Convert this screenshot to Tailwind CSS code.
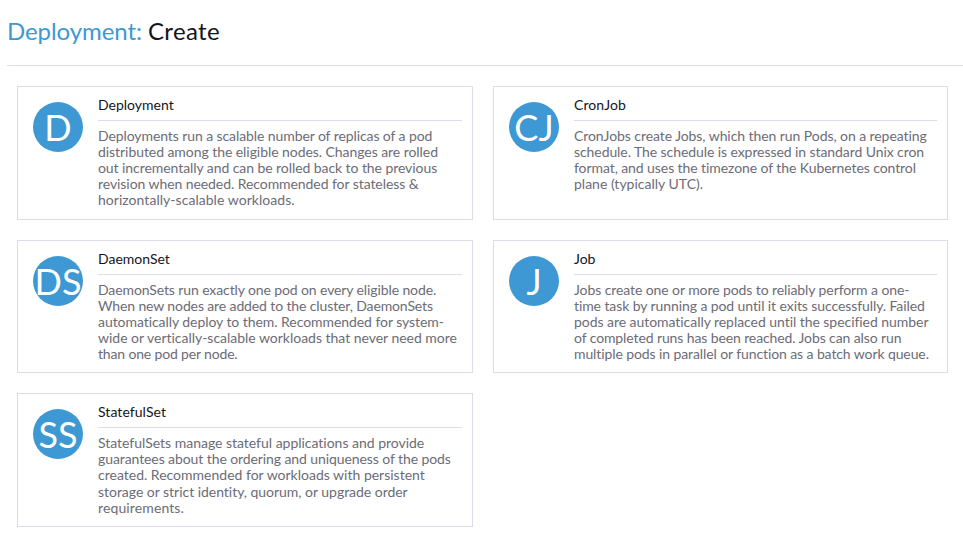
<!DOCTYPE html>
<html lang="en"><head><meta charset="utf-8"><title>Deployment: Create</title>
<script src="https://cdn.jsdelivr.net/npm/@tailwindcss/browser@4"></script></head>
<body class="bg-white font-['Lato',sans-serif] text-[14px] leading-[16px] text-[#141419] w-[963px] h-[537px] overflow-hidden [font-variant-ligatures:none]">
<header class="ml-[7px] h-[66px] border-b border-[#dcdee7] pt-[16px]"><h1 class="text-[24px] leading-[29px]"><span class="tracking-[-0.08px] text-[#3d98d3]">Deployment:</span> <span class="tracking-[0.35px]">Create</span></h1></header>
<main class="ml-[17px] mt-[20px] grid grid-cols-[456px_455px] gap-x-[20px] gap-y-[20px]">
<article class="flex h-[134px] border border-[#dcdee7] pl-[15px] pr-[10px] pt-[10px]"><div class="mt-[5px] mr-[15px] flex size-[50px] shrink-0 items-center justify-center rounded-full bg-[#3d98d3] text-[36px] text-white">D</div><div class="grow"><h2 class="h-[24px] border-b border-[#dcdee7]">Deployment</h2><p class="mt-[7px] whitespace-nowrap text-[#6c6c76]"><span class="tracking-[-0.09px]">Deployments run a scalable number of replicas of a pod</span><br><span class="tracking-[-0.06px]">distributed among the eligible nodes. Changes are rolled</span><br><span class="tracking-[-0.07px]">out incrementally and can be rolled back to the previous</span><br><span class="tracking-[-0.07px]">revision when needed. Recommended for stateless &amp;</span><br><span class="tracking-[0.04px]">horizontally-scalable workloads.</span></p></div></article>
<article class="flex h-[134px] border border-[#dcdee7] pl-[15px] pr-[10px] pt-[10px]"><div class="mt-[5px] mr-[15px] flex size-[50px] shrink-0 items-center justify-center rounded-full bg-[#3d98d3] text-[36px] text-white">CJ</div><div class="grow"><h2 class="h-[24px] border-b border-[#dcdee7] tracking-[0.1px]">CronJob</h2><p class="mt-[7px] whitespace-nowrap text-[#6c6c76]"><span class="tracking-[-0.07px]">CronJobs create Jobs, which then run Pods, on a repeating</span><br><span class="tracking-[-0.08px]">schedule. The schedule is expressed in standard Unix cron</span><br><span class="tracking-[-0.08px]">format, and uses the timezone of the Kubernetes control</span><br>plane (typically UTC).</p></div></article>
<article class="flex h-[133px] border border-[#dcdee7] pl-[15px] pr-[10px] pt-[10px]"><div class="mt-[5px] mr-[15px] flex size-[50px] shrink-0 items-center justify-center rounded-full bg-[#3d98d3] text-[36px] text-white">DS</div><div class="grow"><h2 class="h-[24px] border-b border-[#dcdee7]">DaemonSet</h2><p class="mt-[7px] whitespace-nowrap text-[#6c6c76]"><span class="tracking-[-0.11px]">DaemonSets run exactly one pod on every eligible node.</span><br><span class="tracking-[-0.12px]">When new nodes are added to the cluster, DaemonSets</span><br><span class="tracking-[-0.06px]">automatically deploy to them. Recommended for system-</span><br><span class="tracking-[-0.02px]">wide or vertically-scalable workloads that never need more</span><br><span class="tracking-[-0.16px]">than one pod per node.</span></p></div></article>
<article class="flex h-[133px] border border-[#dcdee7] pl-[15px] pr-[10px] pt-[10px]"><div class="mt-[5px] mr-[15px] flex size-[50px] shrink-0 items-center justify-center rounded-full bg-[#3d98d3] text-[36px] text-white">J</div><div class="grow"><h2 class="h-[24px] border-b border-[#dcdee7]">Job</h2><p class="mt-[7px] whitespace-nowrap text-[#6c6c76]"><span class="tracking-[-0.09px]">Jobs create one or more pods to reliably perform a one-</span><br><span class="tracking-[-0.09px]">time task by running a pod until it exits successfully. Failed</span><br><span class="tracking-[-0.05px]">pods are automatically replaced until the specified number</span><br><span class="tracking-[-0.11px]">of completed runs has been reached. Jobs can also run</span><br><span class="tracking-[-0.1px]">multiple pods in parallel or function as a batch work queue.</span></p></div></article>
<article class="flex h-[134px] border border-[#dcdee7] pl-[15px] pr-[10px] pt-[10px]"><div class="mt-[5px] mr-[15px] flex size-[50px] shrink-0 items-center justify-center rounded-full bg-[#3d98d3] text-[36px] text-white">SS</div><div class="grow"><h2 class="h-[24px] border-b border-[#dcdee7] tracking-[0.06px]">StatefulSet</h2><p class="mt-[7px] whitespace-nowrap text-[#6c6c76]"><span class="tracking-[-0.02px]">StatefulSets manage stateful applications and provide</span><br><span class="tracking-[-0.09px]">guarantees about the ordering and uniqueness of the pods</span><br><span>created. Recommended for workloads with persistent</span><br><span class="inline-block pt-px tracking-[-0.03px]">storage or strict identity, quorum, or upgrade order</span><br><span class="tracking-[0.12px]">requirements.</span></p></div></article>
</main></body></html>
